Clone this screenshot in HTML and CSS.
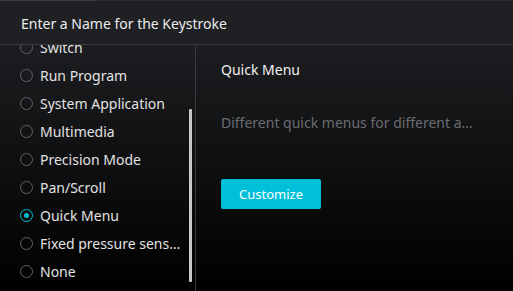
FILE: index.html
```html
<!DOCTYPE html>
<html lang="en">
<head>
    <meta charset="UTF-8">
    <title>Enter a Name for the Keystroke</title>
    <link rel="stylesheet" href="styles.css">
</head>
<body>
    <div class="dialog">
        <div class="top-line"><span class="top-line-lit"></span></div>
        <div class="header">Enter a Name for the Keystroke</div>
        <div class="content">
            <div class="side">
                <ul class="options">
                    <li class="option"><span class="radio"></span><span class="label">Switch</span></li>
                    <li class="option"><span class="radio"></span><span class="label">Run Program</span></li>
                    <li class="option"><span class="radio"></span><span class="label">System Application</span></li>
                    <li class="option"><span class="radio"></span><span class="label">Multimedia</span></li>
                    <li class="option"><span class="radio"></span><span class="label">Precision Mode</span></li>
                    <li class="option"><span class="radio"></span><span class="label">Pan/Scroll</span></li>
                    <li class="option selected"><span class="radio"></span><span class="label">Quick Menu</span></li>
                    <li class="option"><span class="radio"></span><span class="label">Fixed pressure sensitivity</span></li>
                    <li class="option"><span class="radio"></span><span class="label">None</span></li>
                </ul>
                <div class="scrollbar"></div>
            </div>
            <div class="detail">
                <h2 class="detail-title">Quick Menu</h2>
                <p class="detail-desc">Different quick menus for different applications</p>
                <button class="btn-customize">Customize</button>
            </div>
        </div>
    </div>
</body>
</html>
```
FILE: styles.css
```css
* {
    margin: 0;
    padding: 0;
    box-sizing: border-box;
}
body {
    font-family: "Noto Sans", "Open Sans", Arial, sans-serif;
    background-color: #000;
    color: #e6e6e6;
    width: 513px;
    height: 291px;
    overflow: hidden;
}
.dialog {
    display: flex;
    flex-direction: column;
    height: 291px;
}
.top-line {
    height: 1px;
    background-color: #2a2b2e;
}
.top-line-lit {
    display: block;
    width: 97px;
    height: 1px;
    background-color: #3d3e41;
}
.header {
    height: 44px;
    padding-left: 21px;
    padding-top: 2px;
    display: flex;
    align-items: center;
    font-size: 14px;
    color: #ececec;
    background-color: #1f2023;
    border-bottom: 1px solid #3a3b3e;
}
.content {
    flex: 1;
    display: flex;
    background: linear-gradient(to bottom, #1c1d20 0%, #0e0f10 50%, #000 100%);
}
.side {
    position: relative;
    width: 196px;
    border-right: 1px solid #3a3b3e;
    overflow: hidden;
}
.options {
    list-style: none;
    margin-top: -12px;
}
.option {
    height: 28px;
    display: flex;
    align-items: center;
    padding-left: 20px;
    padding-right: 13px;
    font-size: 14px;
    color: #e2e2e2;
}
.label {
    min-width: 0;
    white-space: nowrap;
    overflow: hidden;
    text-overflow: ellipsis;
}
.radio {
    flex: none;
    width: 13px;
    height: 13px;
    margin-right: 7px;
    border: 1.5px solid #626366;
    border-radius: 50%;
    display: flex;
    align-items: center;
    justify-content: center;
}
.option.selected .radio {
    border-color: #00bcd4;
}
.option.selected .radio::after {
    content: "";
    width: 5px;
    height: 5px;
    border-radius: 50%;
    background-color: #00bcd4;
}
.scrollbar {
    position: absolute;
    left: 189px;
    top: 64px;
    width: 3px;
    height: 173px;
    background-color: #c9c9c9;
    border-radius: 1px;
}
.detail {
    flex: 1;
    padding: 15px 25px 0 25px;
    min-width: 0;
}
.detail-title {
    font-size: 14px;
    font-weight: normal;
    color: #f0f0f0;
    line-height: 20px;
}
.detail-desc {
    margin-top: 33px;
    font-size: 14px;
    line-height: 20px;
    color: #6a6d71;
    max-width: 259px;
    white-space: nowrap;
    overflow: hidden;
    text-overflow: ellipsis;
}
.btn-customize {
    margin-top: 46px;
    width: 100px;
    height: 30px;
    font-family: inherit;
    font-size: 13px;
    color: #fff;
    background-color: #00bfd8;
    border: none;
    border-radius: 2px;
    cursor: pointer;
}
```
